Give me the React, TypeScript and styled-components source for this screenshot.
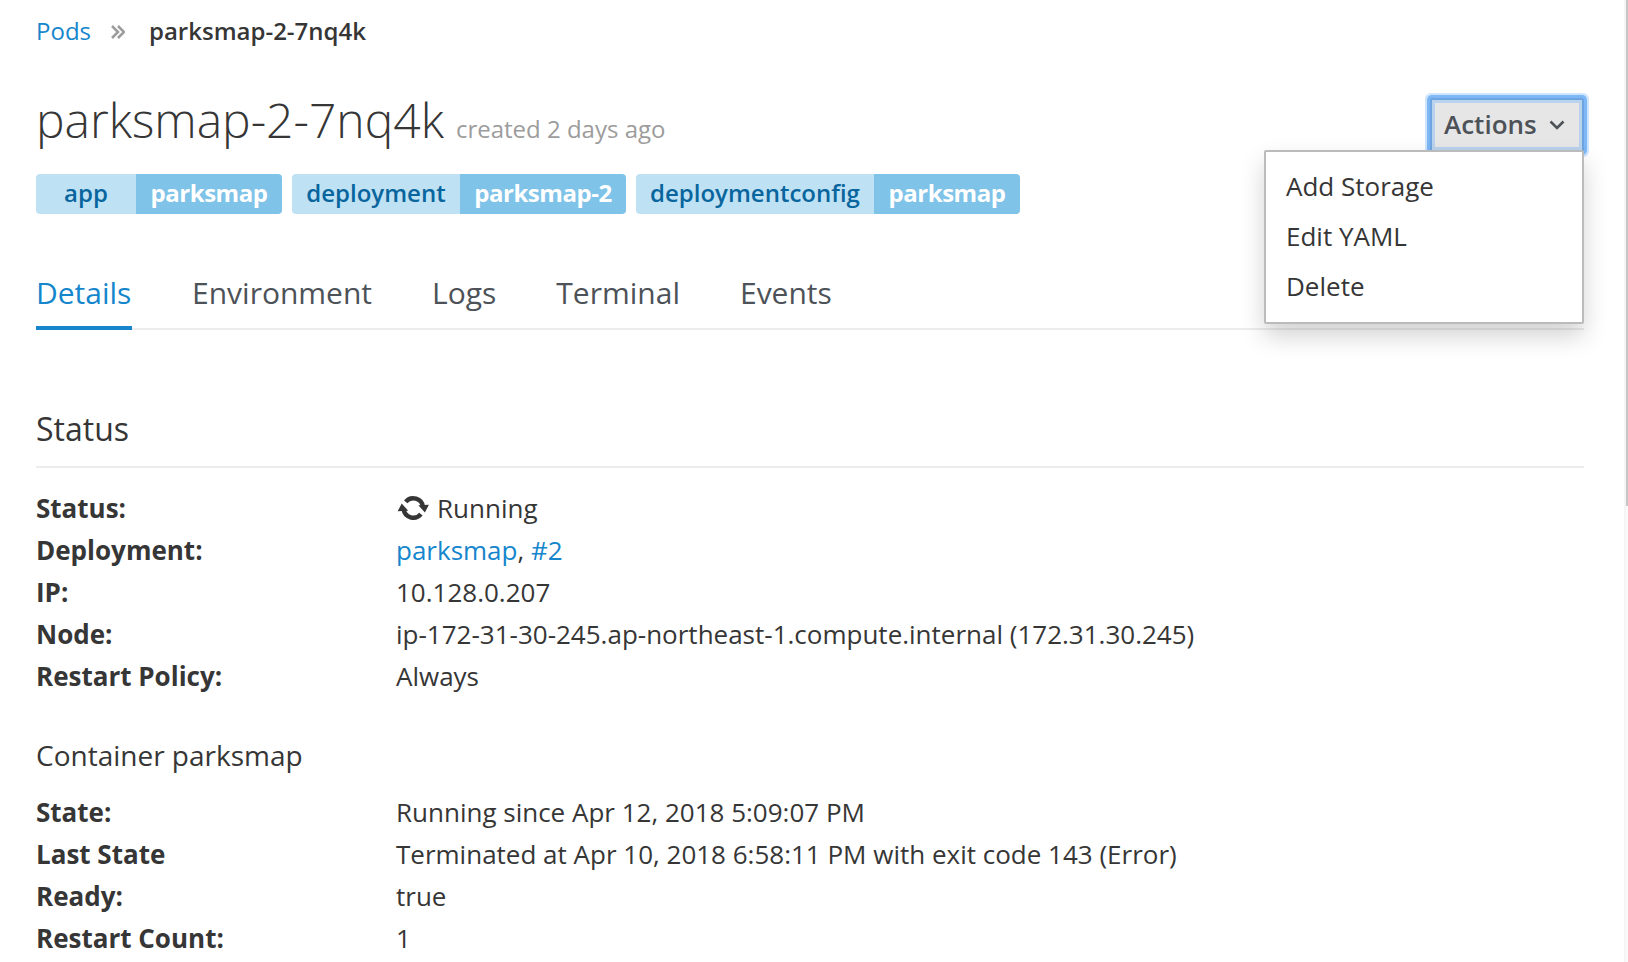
import React from "react";
import styled, { createGlobalStyle } from "styled-components";

const GlobalStyle = createGlobalStyle`
  * { box-sizing: border-box; }
  html, body { margin: 0; padding: 0; background: #fff; }
  body {
    font-family: "Open Sans", "Noto Sans", sans-serif;
    font-size: 26px;
    line-height: 42px;
    color: #363636;
    overflow: hidden;
  }
  h1, h2, h3, p, ul, ol, dl, dd { margin: 0; padding: 0; font-weight: 400; }
  ul, ol { list-style: none; }
`;

const Page = styled.div`
  display: flex;
  height: 962px;
  overflow: hidden;
`;

const Main = styled.main`
  flex: 1;
  min-width: 0;
  padding: 0 40px 0 36px;
`;

const ScrollTrack = styled.div`
  width: 4px;
  height: 100%;
  background: #fafafa;
  border-left: 2px solid #f5f5f5;
`;

const ScrollThumb = styled.div`
  height: 506px;
  background: #c6c6c6;
`;

const Link = styled.a`
  color: #1586cc;
  text-decoration: none;
`;

const Breadcrumb = styled.ol`
  display: flex;
  align-items: center;
  font-size: 24px;
  line-height: 40px;
  padding-top: 11px;
`;

const Separator = styled.svg`
  width: 14px;
  height: 16px;
  margin: 2px 24px 0 20px;
  fill: none;
  stroke: #9c9c9c;
  stroke-width: 2.5;
`;

const Crumb = styled.li`
  font-weight: 600;
`;

const Header = styled.header`
  display: flex;
  justify-content: space-between;
  align-items: flex-start;
  height: 123px;
  padding-top: 43px;
`;

const Title = styled.h1`
  font-size: 48px;
  font-weight: 300;
  line-height: 52px;
`;

const Created = styled.small`
  font-size: 24px;
  font-weight: 400;
  color: #9c9c9c;
  margin-left: 12px;
`;

const Dropdown = styled.div`
  position: relative;
  margin-top: 4px;
`;

const ActionsButton = styled.button`
  display: flex;
  align-items: center;
  width: 154px;
  height: 54px;
  padding: 0 0 2px 12px;
  border: 2px solid #6ea5e0;
  border-radius: 2px;
  background: #e6e6e6;
  box-shadow: inset 0 0 0 3px #b9d2ee, 0 0 0 3px #7db7f5, 0 0 0 5px #cfe5fd;
  color: #4d5258;
  font: 600 26px/42px "Open Sans", sans-serif;
`;

const Chevron = styled.svg`
  width: 16px;
  height: 10px;
  margin: 2px 0 0 12px;
  fill: none;
  stroke: currentColor;
  stroke-width: 2.6;
`;

const Menu = styled.ul`
  position: absolute;
  top: 52px;
  right: 0;
  width: 320px;
  height: 174px;
  padding: 9px 0;
  border: 2px solid #bbb;
  border-radius: 2px;
  background: #fff;
  box-shadow: 0 12px 24px rgba(0, 0, 0, 0.18);
`;

const MenuItem = styled.li`
  padding: 4px 20px;
  height: 50px;
`;

const Labels = styled.div`
  display: flex;
  gap: 10px;
  height: 40px;
`;

const Label = styled.span`
  display: flex;
  border-radius: 4px;
  overflow: hidden;
  font-size: 24px;
  font-weight: 600;
  line-height: 38px;
`;

const LabelKey = styled.span<{ $width: number }>`
  width: ${(p) => p.$width}px;
  text-align: center;
  color: #08659d;
  background: #bfe1f4;
`;

const LabelValue = styled.span<{ $width: number }>`
  width: ${(p) => p.$width}px;
  text-align: center;
  color: #fff;
  font-weight: 700;
  letter-spacing: -0.45px;
  background: #7fc3e8;
`;

const Tabs = styled.ul`
  display: flex;
  gap: 60px;
  height: 72px;
  margin-top: 44px;
  border-bottom: 2px solid #ededed;
`;

const Tab = styled.li<{ $active?: boolean }>`
  height: 72px;
  min-width: ${(p) => (p.$active ? "96px" : "0")};
  padding-top: 14px;
  font-size: 30px;
  color: ${(p) => (p.$active ? "#1586cc" : "#4d5258")};
  border-bottom: ${(p) => (p.$active ? "4px solid #1586cc" : "none")};
`;

const SectionTitle = styled.h2`
  height: 138px;
  padding-top: 78px;
  font-size: 32px;
  border-bottom: 2px solid #ededed;
`;

const ContainerTitle = styled.h3`
  margin: 37px 0 15px;
  font-size: 28px;
`;

const Details = styled.dl`
  display: grid;
  grid-template-columns: 360px 1fr;
  grid-auto-rows: 42px;
`;

const FirstDetails = styled(Details)`
  margin-top: 19px;
`;

const Term = styled.dt`
  font-weight: 700;
`;

const Value = styled.dd`
  white-space: nowrap;
`;

const Refresh = styled.svg`
  width: 32px;
  height: 26px;
  margin: 0 8px 0 1px;
  vertical-align: -4px;
`;

const labels = [
  { key: "app", value: "parksmap", kw: 100, vw: 146 },
  { key: "deployment", value: "parksmap-2", kw: 168, vw: 166 },
  { key: "deploymentconfig", value: "parksmap", kw: 238, vw: 146 },
];

const tabs = ["Details", "Environment", "Logs", "Terminal", "Events"];

export default function App() {
  return (
    <Page>
      <GlobalStyle />
      <Main>
        <Breadcrumb>
          <li>
            <Link>Pods</Link>
          </li>
          <Separator viewBox="0 0 14 16">
            <path d="M1 2l6 6-6 6M7 2l6 6-6 6" />
          </Separator>
          <Crumb>parksmap-2-7nq4k</Crumb>
        </Breadcrumb>
        <Header>
          <Title>
            parksmap-2-7nq4k
            <Created>created 2 days ago</Created>
          </Title>
          <Dropdown>
            <ActionsButton>
              Actions
              <Chevron viewBox="0 0 16 10">
                <path d="M1.500 1.500L8 8l6.500-6.500" />
              </Chevron>
            </ActionsButton>
            <Menu>
              <MenuItem>Add Storage</MenuItem>
              <MenuItem>Edit YAML</MenuItem>
              <MenuItem>Delete</MenuItem>
            </Menu>
          </Dropdown>
        </Header>
        <Labels>
          {labels.map((l) => (
            <Label key={l.key}>
              <LabelKey $width={l.kw}>{l.key}</LabelKey>
              <LabelValue $width={l.vw}>{l.value}</LabelValue>
            </Label>
          ))}
        </Labels>
        <Tabs>
          {tabs.map((t, i) => (
            <Tab key={t} $active={i === 0}>
              {t}
            </Tab>
          ))}
        </Tabs>
        <SectionTitle>Status</SectionTitle>
        <FirstDetails>
          <Term>Status:</Term>
          <Value>
            <Refresh viewBox="0 0 32 26">
              <path
                d="M8.700 5.900A9.800 9.800 0 0 1 26 11M23.900 18.100A9.800 9.800 0 0 1 6.600 13"
                fill="none"
                stroke="#363636"
                strokeWidth="4.400"
              />
              <path d="M0.700 15.300L4.700 7.500l6.500 7.200zM31.900 8.700L27.900 16.500l-6.500-7.200z" fill="#363636" />
            </Refresh>
            Running
          </Value>
          <Term>Deployment:</Term>
          <Value>
            <Link>parksmap</Link>, <Link>#2</Link>
          </Value>
          <Term>IP:</Term>
          <Value>10.128.0.207</Value>
          <Term>Node:</Term>
          <Value>ip-172-31-30-245.ap-northeast-1.compute.internal (172.31.30.245)</Value>
          <Term>Restart Policy:</Term>
          <Value>Always</Value>
        </FirstDetails>
        <ContainerTitle>Container parksmap</ContainerTitle>
        <Details>
          <Term>State:</Term>
          <Value>Running since Apr 12, 2018 5:09:07 PM</Value>
          <Term>Last State</Term>
          <Value>Terminated at Apr 10, 2018 6:58:11 PM with exit code 143 (Error)</Value>
          <Term>Ready:</Term>
          <Value>true</Value>
          <Term>Restart Count:</Term>
          <Value>1</Value>
        </Details>
      </Main>
      <ScrollTrack>
        <ScrollThumb />
      </ScrollTrack>
    </Page>
  );
}
